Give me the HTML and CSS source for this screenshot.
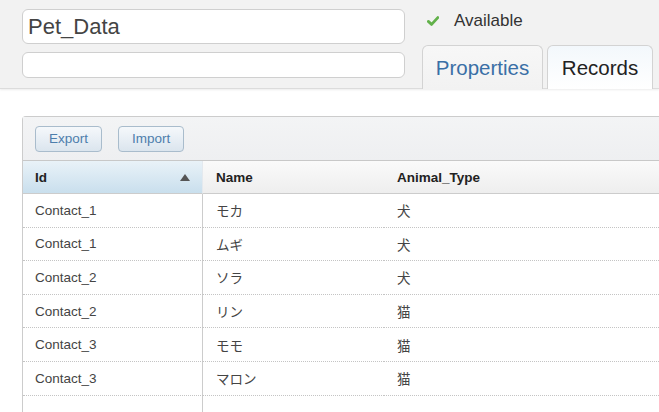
FILE: index.html
```html
<!DOCTYPE html>
<html>
<head>
<meta charset="utf-8">
<link rel="stylesheet" href="styles.css">
</head>
<body>
<div class="top">
  <div class="fields">
    <div class="field field-title">Pet_Data</div>
    <div class="field field-sub"></div>
  </div>
  <div class="side">
    <div class="status">
      <svg class="check" width="12" height="10" viewBox="0 0 12 10"><path d="M1.3 5.4 L4.6 8.4 L10.8 1.6" fill="none" stroke="#62b14a" stroke-width="2.8" stroke-linecap="round" stroke-linejoin="round"/></svg>
      <span>Available</span>
    </div>
    <div class="tabs">
      <div class="tab tab-props">Properties</div>
      <div class="tab tab-active">Records</div>
    </div>
  </div>
</div>
<div class="content">
  <div class="panel">
    <div class="toolbar">
      <div class="btn">Export</div>
      <div class="btn">Import</div>
    </div>
    <div class="grid">
      <div class="hc hc-id"><span>Id</span><i class="sort"></i></div>
      <div class="hc">Name</div>
      <div class="hc">Animal_Type</div>

      <div class="c c-id">Contact_1</div><div class="c">モカ</div><div class="c">犬</div>
      <div class="c c-id">Contact_1</div><div class="c">ムギ</div><div class="c">犬</div>
      <div class="c c-id">Contact_2</div><div class="c">ソラ</div><div class="c">犬</div>
      <div class="c c-id">Contact_2</div><div class="c">リン</div><div class="c">猫</div>
      <div class="c c-id">Contact_3</div><div class="c">モモ</div><div class="c">猫</div>
      <div class="c c-id">Contact_3</div><div class="c">マロン</div><div class="c">猫</div>

      <div class="f c-id"></div><div class="f"></div><div class="f"></div>
    </div>
  </div>
</div>
</body>
</html>
```

FILE: styles.css
```css
html, body {
  margin: 0;
  padding: 0;
  overflow: hidden;
  background: #ffffff;
  font-family: "Liberation Sans", Arial, "Noto Sans CJK JP", sans-serif;
  color: #333333;
}
body {
  width: 659px;
  height: 412px;
}
.top {
  height: 88px;
  background: #f2f2f2;
  display: flex;
  border-bottom: 1px solid #dcdcdc;
  box-shadow: 0 1px 2px rgba(0,0,0,0.08);
  position: relative;
  z-index: 1;
}
.fields {
  padding: 9px 0 0 22px;
  width: 383px;
  display: flex;
  flex-direction: column;
  gap: 8px;
}
.field {
  box-sizing: border-box;
  background: #ffffff;
  border: 1px solid #cfcfcf;
  border-radius: 6px;
}
.field-title {
  height: 35px;
  font-size: 22px;
  line-height: 33px;
  padding-left: 5px;
  color: #444444;
}
.field-sub {
  height: 26px;
}
.side {
  margin-left: 17px;
  display: flex;
  flex-direction: column;
}
.status {
  height: 42px;
  display: flex;
  align-items: center;
  padding-left: 5px;
  box-sizing: border-box;
  font-size: 17px;
  color: #333333;
}
.check {
  margin-right: 15px;
  margin-top: 0;
}
.tabs {
  margin-top: 4px;
  display: flex;
  gap: 4px;
  height: 43px;
}
.tab {
  box-sizing: border-box;
  height: 44px;
  border: 1px solid #d3d3d3;
  border-bottom: none;
  border-radius: 6px 6px 0 0;
  font-size: 20.5px;
  line-height: 42px;
  padding-top: 1px;
  text-align: center;
}
.tab-props {
  width: 121px;
  color: #3a6fa6;
  background: linear-gradient(#f7f7f7, #f2f2f2);
}
.tab-active {
  width: 106px;
  color: #222222;
  background: linear-gradient(#f3f8fc, #ffffff);
  position: relative;
  z-index: 2;
}
.content {
  padding: 27px 0 0 22px;
}
.panel {
  width: 637px;
  border: 1px solid #cccccc;
  border-right: none;
  border-bottom: none;
  border-top-left-radius: 4px;
  box-sizing: border-box;
}
.toolbar {
  height: 44px;
  background: linear-gradient(#f3f4f5, #eeeff1);
  border-bottom: 1px solid #c8c8c8;
  display: flex;
  align-items: center;
  gap: 16px;
  padding-left: 12px;
  box-sizing: border-box;
}
.btn {
  box-sizing: border-box;
  height: 26px;
  padding: 0 13px;
  border: 1px solid #a9bccc;
  border-radius: 4px;
  background: linear-gradient(#f5f8fb, #dbe5ee);
  color: #4d7eac;
  font-size: 13.5px;
  line-height: 24px;
  margin-top: 1px;
}
.grid {
  display: grid;
  grid-template-columns: 180px 181px 1fr;
}
.hc {
  height: 33px;
  box-sizing: border-box;
  border-bottom: 1px solid #cccccc;
  background: linear-gradient(#fafafa, #eeeeee);
  font-weight: bold;
  font-size: 13.5px;
  color: #222222;
  display: flex;
  align-items: center;
  padding-left: 13px;
}
.hc-id {
  justify-content: space-between;
  padding-left: 12px;
  padding-right: 12px;
  background: linear-gradient(#e9f2f8, #c9dfed);
  border-right: 1px solid #e4e9ee;
}
.sort {
  width: 0;
  height: 0;
  border-left: 5px solid transparent;
  border-right: 5px solid transparent;
  border-bottom: 7px solid #555555;
  margin-top: 1px;
}
.c {
  height: 33.6px;
  box-sizing: border-box;
  border-bottom: 1px dotted #c4c4c4;
  font-size: 13.5px;
  color: #444444;
  display: flex;
  align-items: center;
  padding-left: 13px;
}
.c-id {
  border-right: 1px solid #cccccc;
  padding-left: 12px;
}
.f {
  height: 16px;
}
```
